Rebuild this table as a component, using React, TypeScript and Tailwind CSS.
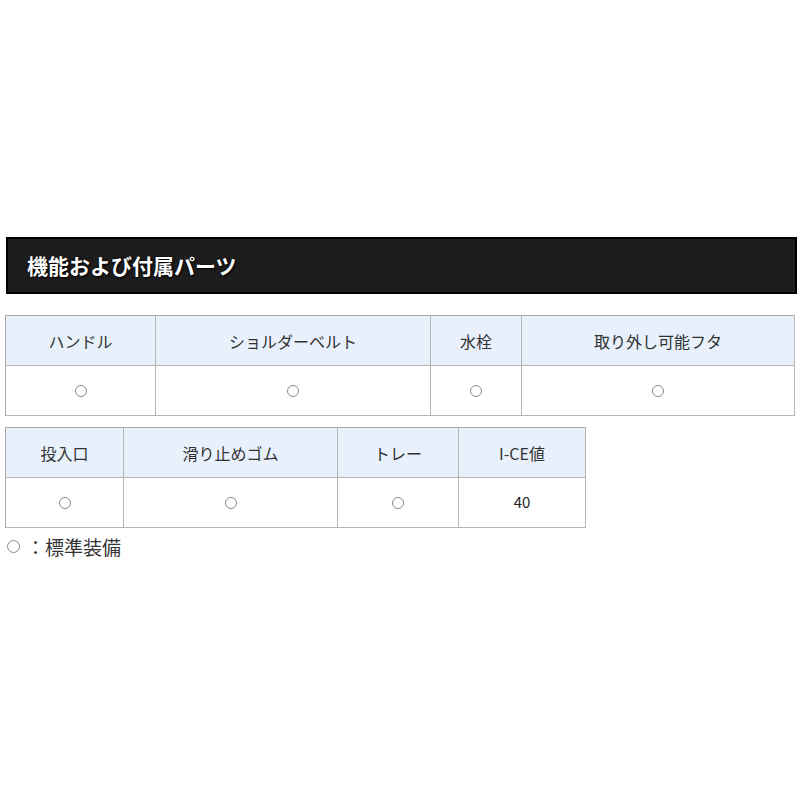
import React from "react";

const jp = { fontFamily: '"Noto Sans CJK JP", "Noto Sans", sans-serif' };

function Circle() {
  return <span className="inline-block w-[12px] h-[12px] rounded-full border border-[#8a8a8a]" />;
}

type Col = { label: string; value: React.ReactNode };

function SpecTable({ cols, template, width }: { cols: Col[]; template: string; width: string }) {
  return (
    <div className={`grid ${template} ${width} border-l border-t border-[#a9a9a9]`}>
      {cols.map((c, i) => (
        <div
          key={"h" + i}
          className="h-[50px] flex items-center justify-center bg-[#e7f0fb] border-r border-b border-[#b5b5b5] text-[16px] text-[#333]"
        >
          {c.label}
        </div>
      ))}
      {cols.map((c, i) => (
        <div
          key={"v" + i}
          className="h-[50px] flex items-center justify-center bg-white border-r border-b border-[#b5b5b5] text-[15px] text-[#333]"
        >
          {c.value}
        </div>
      ))}
    </div>
  );
}

export default function App() {
  return (
    <div className="w-[800px] h-[800px] bg-white pt-[237px]" style={jp}>
      <div className="ml-[6px] w-[791px] h-[57px] bg-[#1d1d1d] border-2 border-black flex items-center pl-[19px]">
        <span className="text-white font-bold text-[21px] leading-none [text-shadow:0_0_2px_#000,1px_1px_2px_#000]">
          機能および付属パーツ
        </span>
      </div>
      <div className="ml-[5px] mt-[21px]">
        <SpecTable
          template="grid-cols-[150px_275px_91px_273px]"
          width="w-[790px]"
          cols={[
            { label: "ハンドル", value: <Circle /> },
            { label: "ショルダーベルト", value: <Circle /> },
            { label: "水栓", value: <Circle /> },
            { label: "取り外し可能フタ", value: <Circle /> },
          ]}
        />
      </div>
      <div className="ml-[5px] mt-[11px]">
        <SpecTable
          template="grid-cols-[118px_214px_121px_127px]"
          width="w-[581px]"
          cols={[
            { label: "投入口", value: <Circle /> },
            { label: "滑り止めゴム", value: <Circle /> },
            { label: "トレー", value: <Circle /> },
            { label: "I-CE値", value: <span className="text-[15px] text-[#222]">40</span> },
          ]}
        />
      </div>
      <div className="ml-[7px] mt-[9px] flex items-center text-[19px] text-[#333] leading-none">
        <span className="inline-block w-[13px] h-[13px] rounded-full border border-[#8a8a8a] mr-[6px]" />
        <span>：標準装備</span>
      </div>
    </div>
  );
}
